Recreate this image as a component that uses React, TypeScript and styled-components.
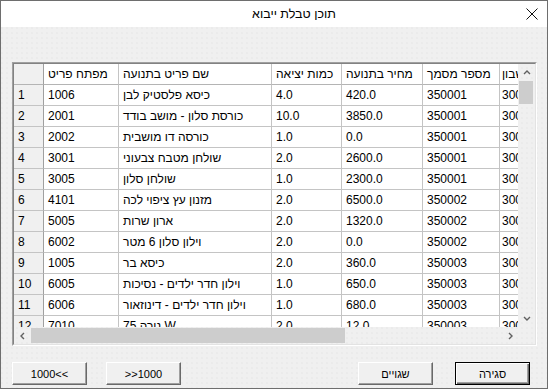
import React from 'react';
import styled, { createGlobalStyle } from 'styled-components';

const GlobalStyle = createGlobalStyle`
  html, body {
    margin: 0;
    padding: 0;
    background: #ffffff;
  }
  * {
    box-sizing: border-box;
  }
`;

const COLUMNS = [30, 75, 153, 70, 81, 77, 100];
const HEADERS = ['', 'מפתח פריט', 'שם פריט בתנועה', 'כמות יציאה', 'מחיר בתנועה', 'מספר מסמך', 'מספר חשבון'];

const ROWS: string[][] = [
  ['1006', 'כיסא פלסטיק לבן', '4.0', '420.0', '350001'],
  ['2001', 'כורסת סלון - מושב בודד', '10.0', '3850.0', '350001'],
  ['2002', 'כורסה דו מושבית', '1.0', '0.0', '350001'],
  ['3001', 'שולחן מטבח צבעוני', '2.0', '2600.0', '350001'],
  ['3005', 'שולחן סלון', '1.0', '2300.0', '350001'],
  ['4101', 'מזנון עץ ציפוי לכה', '2.0', '6500.0', '350002'],
  ['5005', 'ארון שרות', '2.0', '1320.0', '350002'],
  ['6002', 'וילון סלון  6 מטר', '2.0', '0.0', '350002'],
  ['1005', 'כיסא בר', '2.0', '360.0', '350003'],
  ['6005', 'וילון חדר ילדים - נסיכות', '1.0', '650.0', '350003'],
  ['6006', 'וילון חדר ילדים - דינוזאור', '1.0', '680.0', '350003'],
  ['7010', 'נורה 75 W', '2.0', '12.0', '350003'],
];

const Chevron = ({ dir }: { dir: 'up' | 'down' | 'left' | 'right' }) => {
  const points = {
    up: '1,5 4,2 7,5',
    down: '1,2 4,5 7,2',
    left: '5,1 2,4 5,7',
    right: '3,1 6,4 3,7',
  }[dir];
  return (
    <svg width="8" height="8" viewBox="0 0 8 8">
      <polyline points={points} fill="none" stroke="#606060" strokeWidth="1.4" />
    </svg>
  );
};

export default function App() {
  return (
    <>
      <GlobalStyle />
      <Window>
        <TitleBar>
          <Title>תוכן טבלת ייבוא</Title>
          <CloseButton>
            <svg width="12" height="12" viewBox="0 0 12 12">
              <path d="M0.5 0.5 L11.5 11.5 M11.5 0.5 L0.5 11.5" stroke="#111" strokeWidth="1" />
            </svg>
          </CloseButton>
        </TitleBar>
        <Body>
          <Frame>
            <Well>
              <TopPart>
                <Viewport>
                  <Grid>
                    {HEADERS.map((h, i) => (
                      <Cell key={'h' + i} $head $rowHead={i === 0} $last={i === HEADERS.length - 1}>
                        {h}
                      </Cell>
                    ))}
                    {ROWS.map((row, r) => (
                      <React.Fragment key={r}>
                        <Cell $rowHead>{r + 1}</Cell>
                        {row.map((v, c) => (
                          <Cell key={c}>{v}</Cell>
                        ))}
                        <Cell $last>300001</Cell>
                      </React.Fragment>
                    ))}
                  </Grid>
                </Viewport>
                <VScroll>
                  <ArrowBox>
                    <Chevron dir="up" />
                  </ArrowBox>
                  <VThumb />
                  <Spacer />
                  <ArrowBox>
                    <Chevron dir="down" />
                  </ArrowBox>
                </VScroll>
              </TopPart>
              <BottomPart>
                <HScroll>
                  <ArrowBox>
                    <Chevron dir="left" />
                  </ArrowBox>
                  <HThumb />
                  <Spacer />
                  <ArrowBox>
                    <Chevron dir="right" />
                  </ArrowBox>
                </HScroll>
                <Corner />
              </BottomPart>
            </Well>
          </Frame>
          <ButtonRow>
            <ButtonGroup $gap={19}>
              <PushButton>1000&lt;&lt;</PushButton>
              <PushButton>&gt;&gt;1000</PushButton>
            </ButtonGroup>
            <ButtonGroup $gap={22}>
              <PushButton>שגויים</PushButton>
              <PushButton $default>סגירה</PushButton>
            </ButtonGroup>
          </ButtonRow>
        </Body>
      </Window>
    </>
  );
}

const Window = styled.div`
  width: 548px;
  height: 389px;
  border: 1px solid #6e6e6e;
  display: flex;
  flex-direction: column;
  font-family: 'Liberation Sans', 'DejaVu Sans', sans-serif;
  color: #000;
  overflow: hidden;
`;

const TitleBar = styled.div`
  height: 26px;
  flex: none;
  display: flex;
  align-items: center;
  background: #ffffff;
`;

const Title = styled.div`
  flex: 1;
  text-align: center;
  padding-left: 70px;
  font-size: 12.5px;
  color: #000;
`;

const CloseButton = styled.div`
  width: 30px;
  height: 26px;
  display: flex;
  align-items: center;
  justify-content: center;
`;

const Body = styled.div`
  flex: 1;
  display: flex;
  flex-direction: column;
  padding: 35px 10px 3px 11px;
  background-color: #f0f0f0;
  background-image: radial-gradient(circle at 1px 1px, #e0e0e0 0.5px, transparent 0.8px);
  background-size: 5px 5px;
`;

const Frame = styled.div`
  height: 284px;
  flex: none;
  border: 1px solid;
  border-color: #a0a0a0 #ffffff #ffffff #a0a0a0;
`;

const Well = styled.div`
  height: 100%;
  display: flex;
  flex-direction: column;
  border: 1px solid;
  border-color: #828282 #e3e3e3 #e3e3e3 #828282;
`;

const TopPart = styled.div`
  height: 263px;
  display: flex;
`;

const BottomPart = styled.div`
  height: 17px;
  display: flex;
`;

const Viewport = styled.div`
  width: 504px;
  overflow: hidden;
  background: #ffffff;
`;

const Grid = styled.div`
  display: grid;
  grid-template-columns: ${COLUMNS.map((c) => c + 'px').join(' ')};
  grid-auto-rows: 21px;
  width: max-content;
`;

const Cell = styled.div<{ $head?: boolean; $rowHead?: boolean; $last?: boolean }>`
  border-right: 1px solid ${(p) => (p.$rowHead ? '#a0a0a0' : '#c4c4c4')};
  border-bottom: 1px solid ${(p) => (p.$head ? '#b4b4b4' : '#c4c4c4')};
  background: ${(p) => (p.$rowHead ? '#f0f0f0' : '#ffffff')};
  padding: 0 4px 0 ${(p) => (p.$last ? 2 : 4)}px;
  font-size: 12px;
  line-height: 20px;
  white-space: nowrap;
  overflow: hidden;
  text-align: left;
`;

const VScroll = styled.div`
  width: 17px;
  display: flex;
  flex-direction: column;
`;

const HScroll = styled.div`
  width: 504px;
  display: flex;
`;

const ArrowBox = styled.div`
  width: 17px;
  height: 17px;
  flex: none;
  display: flex;
  align-items: center;
  justify-content: center;
`;

const VThumb = styled.div`
  height: 23px;
  margin: 0 2px 0 1px;
  background: #cdcdcd;
`;

const HThumb = styled.div`
  width: 314px;
  margin: 1px 0;
  background: #cdcdcd;
`;

const Spacer = styled.div`
  flex: 1;
`;

const Corner = styled.div`
  width: 17px;
`;

const ButtonRow = styled.div`
  margin-top: 16px;
  padding-right: 7px;
  display: flex;
  justify-content: space-between;
  align-items: center;
`;

const ButtonGroup = styled.div<{ $gap: number }>`
  display: flex;
  gap: ${(p) => p.$gap}px;
`;

const PushButton = styled.div<{ $default?: boolean }>`
  width: 75px;
  height: 23px;
  display: flex;
  align-items: center;
  justify-content: center;
  background: #f0f0f0;
  font-size: 11px;
  border: 1px solid;
  border-color: ${(p) => (p.$default ? '#000 #000 #000 #000' : '#ffffff #696969 #696969 #ffffff')};
  box-shadow: ${(p) =>
    p.$default
      ? 'inset 1px 1px 0 #ffffff, inset -1px -1px 0 #696969, inset -2px -2px 0 #a0a0a0'
      : 'inset -1px -1px 0 #a0a0a0'};
`;
